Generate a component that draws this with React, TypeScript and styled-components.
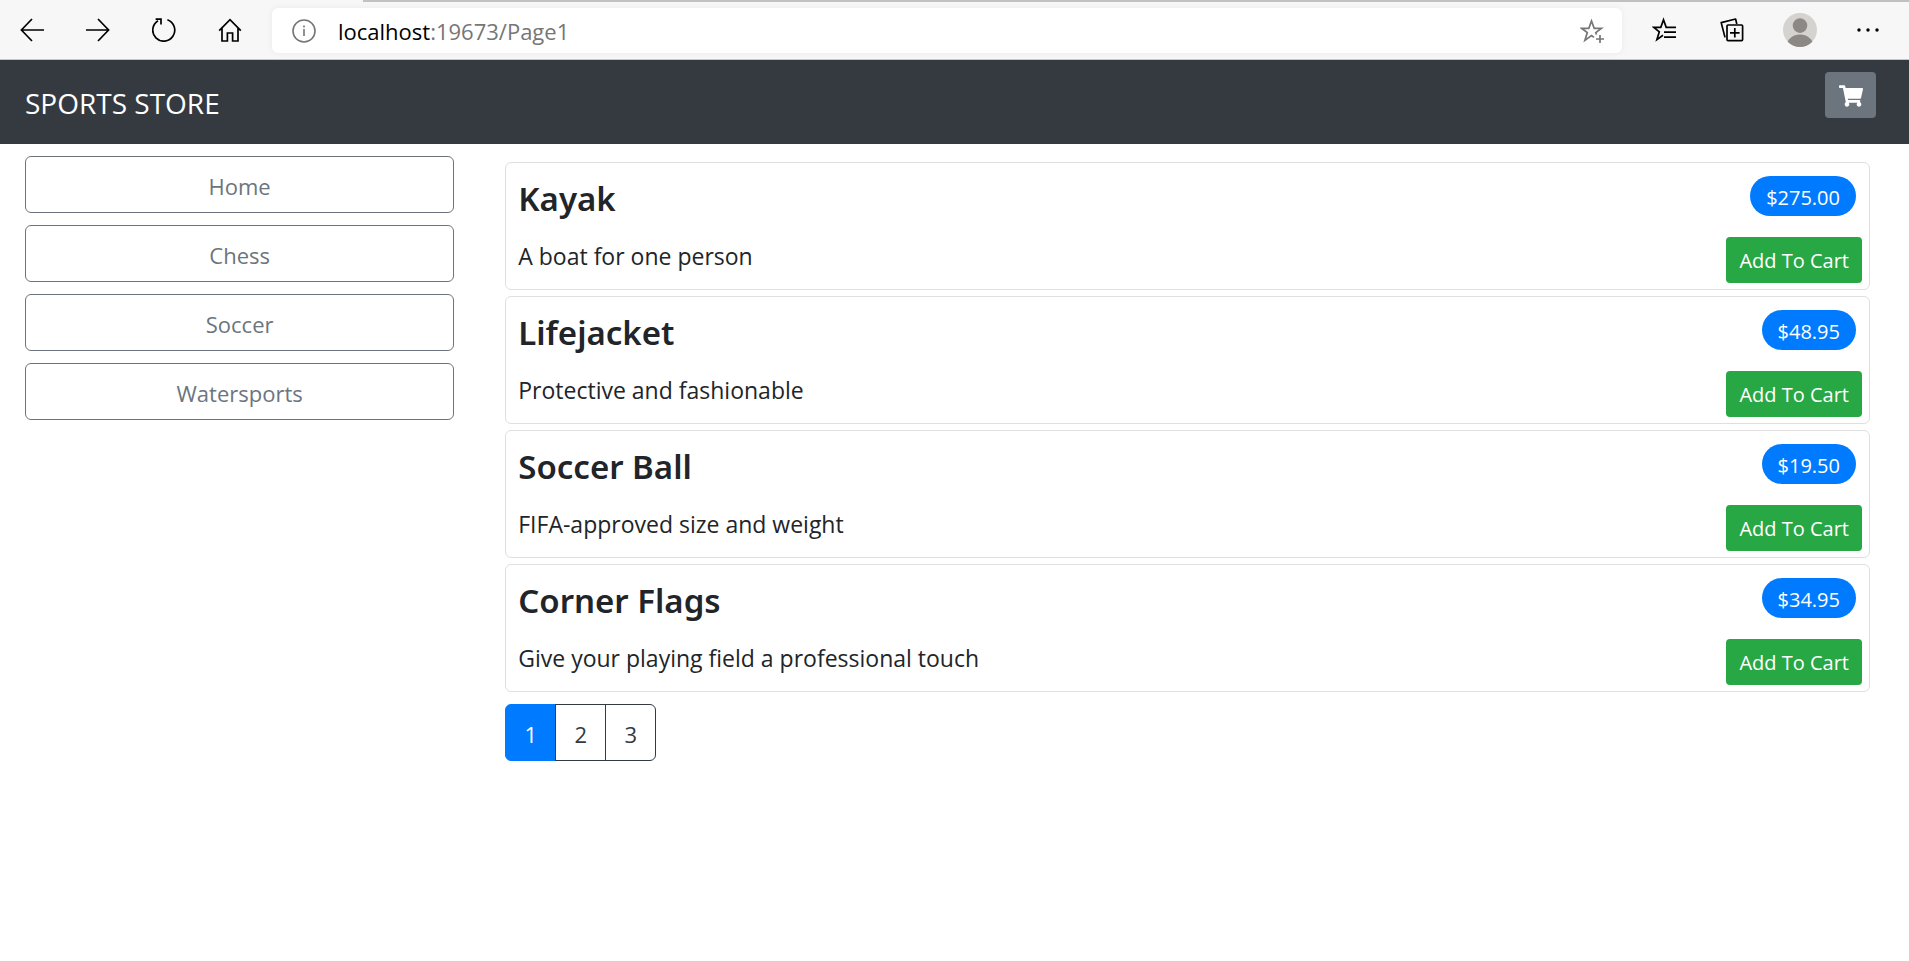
import React from 'react';
import styled, { createGlobalStyle, css } from 'styled-components';
import { FaShoppingCart } from 'react-icons/fa';

const GlobalStyle = createGlobalStyle`
  *, *::before, *::after { box-sizing: border-box; }
  body {
    margin: 0;
    background: #fff;
    color: #212529;
    font-family: "Open Sans", "Noto Sans", sans-serif;
    font-size: 22px;
    line-height: 34px;
  }
`;

/* Browser chrome */

const Chrome = styled.header`
  background: #f7f7f7;
  border-bottom: 1px solid #c6c7c9;
`;

const TabEdge = styled.div`
  height: 2px;
  margin-left: 19%;
  background: #c1c1c1;
`;

const Toolbar = styled.div`
  display: flex;
  align-items: center;
  height: 57px;
  padding: 0 7px 0 20px;
`;

const NavButtons = styled.div`
  display: flex;
  gap: 42px;
  margin-right: 30px;
  padding-bottom: 2px;
`;

const IconButton = styled.button<{ $muted?: boolean }>`
  display: flex;
  align-items: center;
  justify-content: center;
  padding: 0;
  border: 0;
  background: none;
  color: ${(p) => (p.$muted ? '#767676' : '#000')};
`;

const SlotButton = styled(IconButton)`
  width: 68px;
  height: 45px;
  padding-bottom: 1px;
`;

const AddressBar = styled.div`
  flex: 1;
  display: flex;
  align-items: center;
  gap: 22px;
  height: 45px;
  margin-right: 8px;
  padding: 0 18px 0 20px;
  border-radius: 6px;
  background: #fff;
  color: #767676;
  box-shadow: 0 0 6px rgba(0, 0, 0, 0.06);
`;

const Address = styled.div`
  flex: 1;
  outline: 0;
`;

const Host = styled.span`
  color: #000;
`;

const Glyph = styled.svg`
  display: block;
  fill: none;
  stroke: currentColor;
  stroke-width: 1.7;
`;

/* Store */

const Banner = styled.div`
  display: flex;
  align-items: flex-start;
  justify-content: space-between;
  padding: 12px 33px 12px 25px;
  background: #353a41;
`;

const Brand = styled.a`
  padding: 11px 0 9px;
  color: #fff;
  font-size: 28px;
  line-height: 40px;
  text-decoration: none;
`;

const CartButton = styled.button`
  display: flex;
  align-items: center;
  justify-content: center;
  width: 51px;
  height: 46px;
  padding: 2px 0 0;
  border: 0;
  border-radius: 4px;
  background: #6c757d;
  color: #fff;
`;

const Body = styled.div`
  display: grid;
  grid-template-columns: 1fr 3fr;
`;

const Sidebar = styled.nav`
  display: flex;
  flex-direction: column;
  gap: 12px;
  padding: 12px 23px 12px 25px;
`;

const CategoryLink = styled.a`
  padding: 12px 16px 9px;
  border: 1px solid #6c757d;
  border-radius: 6px;
  color: #6c757d;
  text-align: center;
  text-decoration: none;
`;

const Main = styled.main`
  padding: 18px 39px 24px 28px;
`;

const Products = styled.div`
  display: flex;
  flex-direction: column;
  gap: 6px;
`;

const Card = styled.article`
  display: flex;
  justify-content: space-between;
  padding: 6px 7px;
  border: 1px solid #dfdfdf;
  border-radius: 6px;
`;

const Info = styled.div`
  padding: 6px 5px 0;
`;

const Name = styled.h4`
  margin: 0 0 16px;
  font-family: "Noto Sans", sans-serif;
  font-size: 33px;
  font-weight: 600;
  line-height: 48px;
`;

const Description = styled.p`
  margin: 0;
  font-size: 23px;
`;

const Actions = styled.div`
  display: flex;
  flex-direction: column;
  align-items: flex-end;
  gap: 21px;
  padding-top: 7px;
`;

const Price = styled.span`
  margin-right: 6px;
  padding: 8px 16px 4px;
  border-radius: 20px;
  background: #007bff;
  color: #fff;
  font-size: 20px;
  line-height: 28px;
`;

const AddButton = styled.button`
  padding: 10px 13px 8px;
  border: 0;
  border-radius: 4px;
  background: #28a745;
  color: #fff;
  font-family: inherit;
  font-size: 20px;
  line-height: 28px;
`;

const Pagination = styled.nav`
  display: flex;
  margin-top: 12px;
`;

const PageLink = styled.a<{ $active?: boolean }>`
  width: 51px;
  padding: 12px 0 9px;
  border: 1px solid #343a40;
  color: #343a40;
  text-align: center;
  text-decoration: none;
  & + & { margin-left: -1px; }
  &:first-child { border-radius: 6px 0 0 6px; }
  &:last-child { border-radius: 0 6px 6px 0; }
  ${(p) =>
    p.$active &&
    css`
      border-color: #007bff;
      background: #007bff;
      color: #fff;
    `}
`;

const BackIcon = () => (
  <Glyph width="24" height="24" viewBox="0 0 24 24">
    <path d="M24 12H1.6M12 1L1.4 12L12 23" />
  </Glyph>
);

const ForwardIcon = () => (
  <Glyph width="24" height="24" viewBox="0 0 24 24">
    <path d="M0 12H22.4M12 1L22.6 12L12 23" />
  </Glyph>
);

const ReloadIcon = () => (
  <Glyph width="24" height="24" viewBox="0 0 24 24">
    <path d="M15.4 1.8A11 11 0 1 1 6 2.8M3.6 1.2H9V6.6" />
  </Glyph>
);

const HomeIcon = () => (
  <Glyph width="24" height="24" viewBox="0 0 24 24">
    <path d="M1.2 12.6L12 1.6L22.8 12.6M4 10V23H9.4V15H14.6V23H20V10" />
  </Glyph>
);

const InfoIcon = () => (
  <Glyph width="24" height="24" viewBox="0 0 24 24">
    <circle cx="12" cy="12" r="11" strokeWidth="1.6" />
    <path d="M12 10V17M12 6.6V8.4" strokeWidth="1.6" />
  </Glyph>
);

const AddFavoriteIcon = () => (
  <Glyph width="24" height="26" viewBox="0 0 24 26">
    <path d="M14 19.4L11.5 17.6L4.9 22.4L7.3 14.6L1.6 10.3H8.8L11.5 3L14.2 10.3H21.4L15.8 14.6L16.3 16.6" />
    <path d="M20 17V25M16 21H24" />
  </Glyph>
);

const FavoritesIcon = () => (
  <Glyph width="24" height="26" viewBox="0 0 24 26">
    <path d="M11 18.2L4.9 22.6L7.3 14.8L1.8 10.4H8.8L11.5 2.8L14.2 10.4H24M12 15.2H24M12 20.2H24" />
  </Glyph>
);

const CollectionsIcon = () => (
  <Glyph width="24" height="26" viewBox="0 0 24 26">
    <path d="M5 20.4L1.2 5.6L15.6 2L16.8 7" strokeLinejoin="round" />
    <rect x="7" y="8" width="15.6" height="15.6" rx="1" />
    <path d="M14.8 11V20.6M10 15.8H19.6" />
  </Glyph>
);

const AvatarIcon = () => (
  <Glyph width="34" height="34" viewBox="0 0 34 34">
    <clipPath id="avatar">
      <circle cx="17" cy="17" r="17" />
    </clipPath>
    <g clipPath="url(#avatar)" stroke="none">
      <rect width="34" height="34" fill="#d5d3cf" />
      <circle cx="17" cy="12.6" r="7.3" fill="#8b8885" />
      <ellipse cx="17" cy="32" rx="13" ry="10.4" fill="#8b8885" />
    </g>
  </Glyph>
);

const MoreIcon = () => (
  <Glyph width="24" height="24" viewBox="0 0 24 24">
    <g fill="currentColor" stroke="none">
      <circle cx="3" cy="12" r="1.7" />
      <circle cx="12" cy="12" r="1.7" />
      <circle cx="21" cy="12" r="1.7" />
    </g>
  </Glyph>
);

const categories = ['Home', 'Chess', 'Soccer', 'Watersports'];

const products = [
  { name: 'Kayak', description: 'A boat for one person', price: '$275.00' },
  { name: 'Lifejacket', description: 'Protective and fashionable', price: '$48.95' },
  { name: 'Soccer Ball', description: 'FIFA-approved size and weight', price: '$19.50' },
  { name: 'Corner Flags', description: 'Give your playing field a professional touch', price: '$34.95' },
];

const pages = [1, 2, 3];

export default function App() {
  return (
    <>
      <GlobalStyle />
      <Chrome>
        <TabEdge />
        <Toolbar>
          <NavButtons>
            <IconButton aria-label="Back"><BackIcon /></IconButton>
            <IconButton aria-label="Forward"><ForwardIcon /></IconButton>
            <IconButton aria-label="Refresh"><ReloadIcon /></IconButton>
            <IconButton aria-label="Home"><HomeIcon /></IconButton>
          </NavButtons>
          <AddressBar>
            <IconButton $muted aria-label="View site information"><InfoIcon /></IconButton>
            <Address
              role="textbox"
              aria-label="Address"
              contentEditable
              suppressContentEditableWarning
              spellCheck={false}
            >
              <Host>localhost</Host>:19673/Page1
            </Address>
            <IconButton $muted aria-label="Add this page to favorites"><AddFavoriteIcon /></IconButton>
          </AddressBar>
          <SlotButton aria-label="Favorites"><FavoritesIcon /></SlotButton>
          <SlotButton aria-label="Collections"><CollectionsIcon /></SlotButton>
          <SlotButton aria-label="Profile"><AvatarIcon /></SlotButton>
          <SlotButton aria-label="Settings and more"><MoreIcon /></SlotButton>
        </Toolbar>
      </Chrome>
      <Banner>
        <Brand href="#">SPORTS STORE</Brand>
        <CartButton aria-label="Cart"><FaShoppingCart size={24} /></CartButton>
      </Banner>
      <Body>
        <Sidebar aria-label="Categories">
          {categories.map((c) => (
            <CategoryLink key={c} href="#">{c}</CategoryLink>
          ))}
        </Sidebar>
        <Main>
          <Products>
            {products.map((p) => (
              <Card key={p.name}>
                <Info>
                  <Name>{p.name}</Name>
                  <Description>{p.description}</Description>
                </Info>
                <Actions>
                  <Price>{p.price}</Price>
                  <AddButton type="button">Add To Cart</AddButton>
                </Actions>
              </Card>
            ))}
          </Products>
          <Pagination aria-label="Pages">
            {pages.map((n) => (
              <PageLink key={n} href="#" $active={n === 1}>{n}</PageLink>
            ))}
          </Pagination>
        </Main>
      </Body>
    </>
  );
}
